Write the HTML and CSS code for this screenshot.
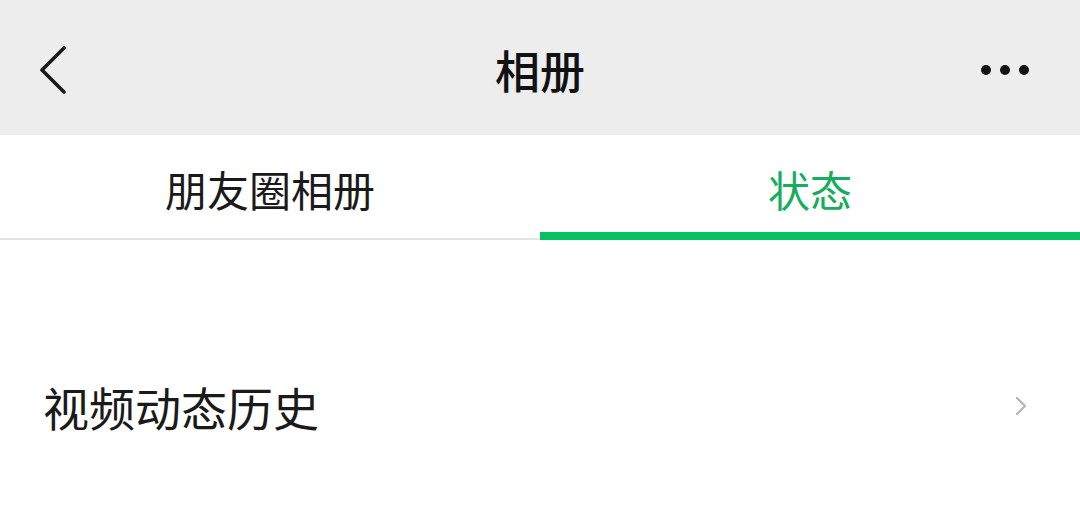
FILE: index.html
```html
<!DOCTYPE html>
<html lang="zh-CN">
<head>
<meta charset="utf-8">
<title>相册</title>
<link rel="stylesheet" href="styles.css">
</head>
<body>
<header class="navbar">
  <div class="nav-left">
    <svg class="back" width="28" height="48" viewBox="0 0 28 48" aria-hidden="true">
      <polyline points="25,2 3,24 25,46" fill="none" stroke="#1a1a1a" stroke-width="3.6" stroke-linecap="round" stroke-linejoin="round"/>
    </svg>
  </div>
  <h1 class="nav-title">相册</h1>
  <div class="nav-right">
    <span class="dot"></span><span class="dot"></span><span class="dot"></span>
  </div>
</header>
<nav class="tabs">
  <div class="tab">朋友圈相册</div>
  <div class="tab active">状态</div>
</nav>
<section class="list">
  <div class="row">
    <span class="row-label">视频动态历史</span>
    <svg class="chev" width="14" height="20" viewBox="0 0 14 20" aria-hidden="true">
      <polyline points="3,2 11,10 3,18" fill="none" stroke="#b5b5b5" stroke-width="2.4" stroke-linecap="round" stroke-linejoin="round"/>
    </svg>
  </div>
</section>
</body>
</html>
```
FILE: styles.css
```css
* { box-sizing: border-box; }
html, body {
  margin: 0;
  padding: 0;
  background: #ffffff;
  font-family: "Noto Sans CJK SC", "Noto Sans", sans-serif;
  color: #1a1a1a;
}
.navbar {
  height: 135px;
  background: #ededed;
  display: grid;
  grid-template-columns: 1fr auto 1fr;
  align-items: center;
  padding-top: 4px;
}
.nav-left {
  display: flex;
  align-items: center;
  padding-left: 39px;
}
.back { display: block; }
.nav-title {
  margin: 0;
  font-size: 45px;
  font-weight: 500;
  line-height: 45px;
  color: #111111;
}
.nav-right {
  display: flex;
  justify-content: flex-end;
  align-items: center;
  gap: 9px;
  padding-right: 51px;
}
.dot {
  width: 10px;
  height: 10px;
  border-radius: 50%;
  background: #111111;
}
.tabs {
  display: flex;
  height: 105px;
  background: #ffffff;
}
.tab {
  flex: 1;
  text-align: center;
  font-size: 42px;
  line-height: 42px;
  padding-top: 33px;
  color: #1a1a1a;
  border-bottom: 2px solid #e3e3e3;
}
.tab.active {
  color: #18ad5e;
  border-bottom: 8px solid #07c160;
}
.list {
  margin-top: 101px;
}
.row {
  height: 130px;
  display: flex;
  align-items: center;
  justify-content: space-between;
  padding: 0 52px 0 43px;
}
.row-label {
  font-size: 46px;
  line-height: 46px;
  color: #1a1a1a;
}
.chev { display: block; }
```
